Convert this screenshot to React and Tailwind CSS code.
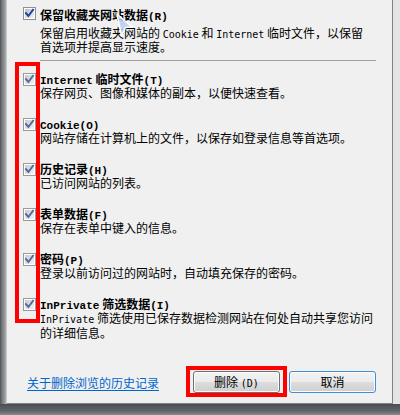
import React from "react";

const cjk = "font-['Noto_Sans_CJK_SC',sans-serif]";

// Latin runs look like SimSun half-width: narrow monospace
const L = ({ children, bold }) => (
  <span
    className={
      bold
        ? "font-['Liberation_Mono',monospace] text-[11px] font-bold"
        : "font-['DejaVu_Sans_Mono',monospace] text-[10px]"
    }
  >
    {children}
  </span>
);

const Check = ({ dim }) => (
  <svg width="13" height="13" viewBox="0 0 13 13" className="shrink-0">
    <defs>
      <linearGradient id={dim ? "cbd" : "cbv"} x1="0" y1="0" x2="1" y2="1">
        <stop offset="0" stopColor={dim ? "#c9cbcf" : "#b9bec6"} />
        <stop offset="1" stopColor={dim ? "#f2f2f2" : "#f4f4f4"} />
      </linearGradient>
    </defs>
    <rect x="0.5" y="0.5" width="12" height="12" fill="#fff" stroke={dim ? "#9a9a9a" : "#8e8f8f"} />
    <rect x="2" y="2" width="9" height="9" fill={`url(#${dim ? "cbd" : "cbv"})`} />
    <path
      d="M3 6.2 L5.4 9 L10 2.8"
      fill="none"
      stroke={dim ? "#5469a0" : "#21409a"}
      strokeWidth="2"
      strokeLinecap="square"
    />
  </svg>
);

const Item = ({ title, lines, dim }) => (
  <div className="flex h-[45px] pl-[16px] gap-[4px]">
    <div className="pt-[1px]">
      <Check dim={dim} />
    </div>
    <div className="flex flex-col">
      <div className="h-[14px] leading-[14px] text-[12px] font-bold whitespace-nowrap text-black">{title}</div>
      {lines.map((l, i) => (
        <div key={i} className="leading-[13px] text-[12px] whitespace-nowrap text-black">
          {l}
        </div>
      ))}
    </div>
  </div>
);

const btn =
  "w-[87px] h-[22px] rounded-[3px] text-[12px] leading-[20px] text-center text-black bg-[linear-gradient(to_bottom,#f2f2f2_0%,#ebebeb_50%,#dddddd_51%,#cfcfcf_100%)] shadow-[inset_0_0_0_1px_#fcfcfc]";

export default function App() {
  const items = [
    {
      title: (
        <>
          <L bold>Internet</L> 临时文件<L bold>(T)</L>
        </>
      ),
      lines: ["保存网页、图像和媒体的副本，以便快速查看。"],
    },
    {
      title: (
        <>
          <L bold>Cookie(O)</L>
        </>
      ),
      lines: ["网站存储在计算机上的文件，以保存如登录信息等首选项。"],
    },
    { title: <>历史记录<L bold>(H)</L></>, lines: ["已访问网站的列表。"] },
    { title: <>表单数据<L bold>(F)</L></>, lines: ["保存在表单中键入的信息。"] },
    { title: <>密码<L bold>(P)</L></>, lines: ["登录以前访问过的网站时，自动填充保存的密码。"] },
    {
      title: (
        <>
          <L bold>InPrivate</L> 筛选数据<L bold>(I)</L>
        </>
      ),
      lines: [
        <>
          <L>InPrivate</L> 筛选使用已保存数据检测网站在何处自动共享您访问
        </>,
        "的详细信息。",
      ],
    },
  ];

  return (
    <div className={`w-[400px] h-[415px] flex flex-col bg-[#5c6167] overflow-hidden ${cjk}`}>
      <div className="flex flex-1">
        <div className="w-[7px] bg-[linear-gradient(to_right,#505356,#7c7f82_35%,#9d9fa1_75%,#d9d9d9)]" />

        <div className="relative flex-1 flex flex-col bg-[#f0f0f0] border-r border-b border-[#7f8387]">
          {/* first option */}
          <div className="flex pl-[16px] pt-[7px] gap-[4px]">
            <Check />
            <div className="flex flex-col pt-[1px]">
              <div className="h-[14px] leading-[14px] text-[12px] font-bold whitespace-nowrap text-black">
                保留收藏夹网站数据<L bold>(R)</L>
              </div>
              <div className="mt-[5px] leading-[12px] text-[12px] whitespace-nowrap text-black">
                保留启用收藏夹网站的 <L>Cookie</L> 和 <L>Internet</L> 临时文件，以保留
              </div>
              <div className="leading-[12px] text-[12px] whitespace-nowrap text-black">首选项并提高显示速度。</div>
            </div>
          </div>

          <div className="mt-[7px] ml-[33px] mr-[16px] h-px bg-[#a0a0a0]" />

          <div className="mt-[11px] flex flex-col">
            {items.map((it, i) => (
              <Item key={i} title={it.title} lines={it.lines} dim />
            ))}
          </div>

          {/* bottom row */}
          <div className="mt-auto mb-[6px] flex items-center pl-[20px] pr-[16px]">
            <a className="text-[12px] leading-[14px] text-[#0066cc] underline underline-offset-2 whitespace-nowrap mt-[2px]">
              关于删除浏览的历史记录
            </a>
            <div className="ml-auto flex items-start gap-[2px]">
              <div className="border-[4px] border-[#ff0000] pt-[1px] px-[3px]">
                <div className={`${btn} border border-[#707070]`}>
                  删除 <L>(D)</L>
                </div>
              </div>
              <div className={`${btn} mt-[5px] border border-[#3c8fd6] shadow-[inset_0_0_0_1px_#bfe4f8]`}>取消</div>
            </div>
          </div>

          {/* red annotation over the check boxes */}
          <div className="absolute left-[8px] top-[62px] w-[25px] h-[261px] border-[4px] border-[#ff0000]" />

          {/* mouse pointer */}
          <svg className="absolute left-[108px] top-[12px]" width="20" height="26" viewBox="0 0 20 26">
            <path
              d="M2 2 L17 15 L10.5 15.5 L6.5 24 Z"
              fill="#b8cfee"
              fillOpacity="0.85"
              stroke="#ffffff"
              strokeWidth="1.5"
              strokeLinejoin="round"
            />
          </svg>
        </div>

        <div className="w-[7px] bg-[#e4e4e4]" />
      </div>
      <div className="h-[11px] bg-[linear-gradient(to_bottom,#4a4e53,#5f6469_60%,#868a8e)]" />
    </div>
  );
}
